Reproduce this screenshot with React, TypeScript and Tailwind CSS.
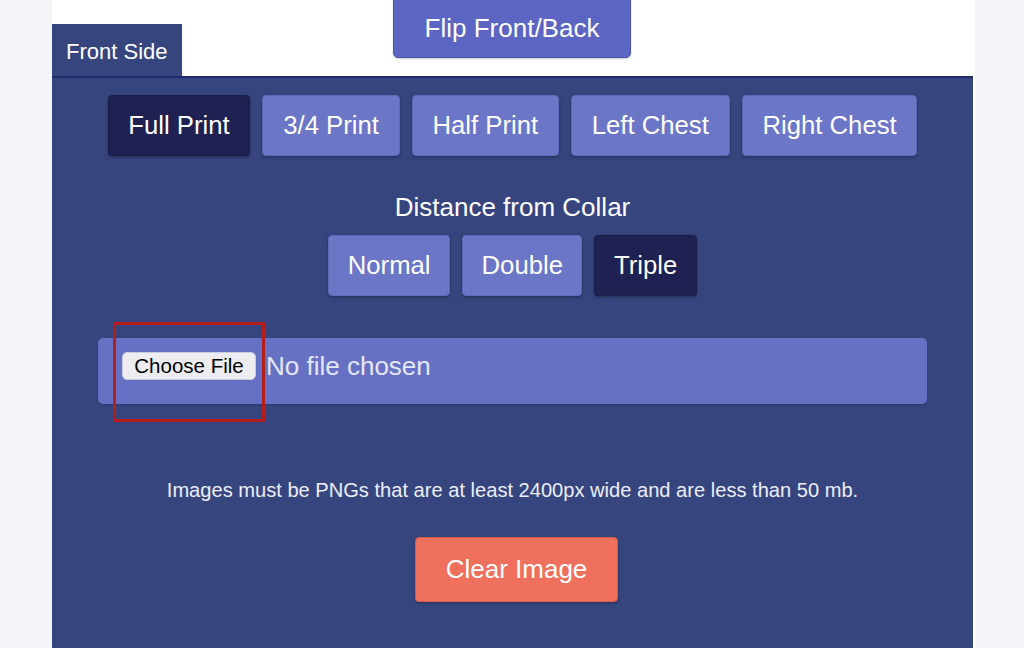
import React from "react";

const font = { fontFamily: '"Liberation Sans", Arial, Helvetica, sans-serif' };

function OptButton({ label, active, tight }: { label: string; active?: boolean; tight?: boolean }) {
  return (
    <button
      className={
        "h-[61px] rounded-[4px] text-[25.7px] text-white shadow-[0_1px_3px_rgba(0,0,0,0.35)] " +
        (tight ? "px-[18.5px] " : "px-[19.8px] ") +
        (active ? "bg-[#1e2152] border border-[#1a1d48]" : "bg-[#6b76c7] border border-[#5e69ba]")
      }
    >
      {label}
    </button>
  );
}

export default function App() {
  return (
    <div className="w-[1024px] h-[648px] bg-[#f4f5f8] overflow-hidden" style={font}>
      <div className="ml-[52px] w-[923px] h-[648px] bg-white flex flex-col">
        <div className="h-[76px] grid grid-cols-[1fr_auto_1fr]">
          <div className="flex items-end">
            <div className="w-[130px] h-[52px] bg-[#37457f] text-white text-[22px] pl-[14px] pt-[11px]">
              Front Side
            </div>
          </div>
          <div className="self-start">
            <button className="mt-[-8px] h-[66px] w-[238px] ml-[-3px] rounded-b-[5px] bg-[#5c65c2] border border-[#4a53ad] text-white text-[26px] pt-[6px] shadow-[0_1px_2px_rgba(0,0,0,0.2)]">
              Flip Front/Back
            </button>
          </div>
          <div />
        </div>
        <div className="w-[921px] flex-1 bg-[#37457f] border-t-2 border-[#1f2a6e] flex flex-col items-center px-[46px]">
          <div className="mt-[17px] flex justify-center gap-[12px]">
            <OptButton label="Full Print" active />
            <OptButton label="3/4 Print" />
            <OptButton label="Half Print" />
            <OptButton label="Left Chest" />
            <OptButton label="Right Chest" />
          </div>
          <div className="mt-[37px] text-white text-[26px] leading-[28px]">Distance from Collar</div>
          <div className="mt-[14px] flex justify-center gap-[12px]">
            <OptButton label="Normal" tight />
            <OptButton label="Double" tight />
            <OptButton label="Triple" active tight />
          </div>
          <div className="relative mt-[42px] w-full h-[66px] bg-[#6771c3] rounded-[5px] shadow-[0_1px_2px_rgba(0,0,0,0.2)] flex items-start pl-[24px] pt-[14px]">
            <span className="h-[28px] w-[134px] bg-[#ececf1] rounded-[5px] border border-[#c9cbe0] flex items-center justify-center text-[20.5px] text-black">
              Choose File
            </span>
            <span className="ml-[10px] text-[26px] leading-[29px] text-[#e4e6f6]">No file chosen</span>
            <div className="absolute left-[15px] top-[-16px] w-[152px] h-[100px] border-[3px] border-[#b3201c]" />
          </div>
          <div className="mt-[74px] text-[20.1px] leading-[24px] text-[#eceef8]">
            Images must be PNGs that are at least 2400px wide and are less than 50 mb.
          </div>
          <button className="mt-[35px] ml-[8px] h-[65px] w-[203px] rounded-[4px] bg-[#ef705d] border border-[#d85d4b] text-white text-[26px] shadow-[0_1px_3px_rgba(0,0,0,0.3)]">
            Clear Image
          </button>
        </div>
      </div>
    </div>
  );
}
